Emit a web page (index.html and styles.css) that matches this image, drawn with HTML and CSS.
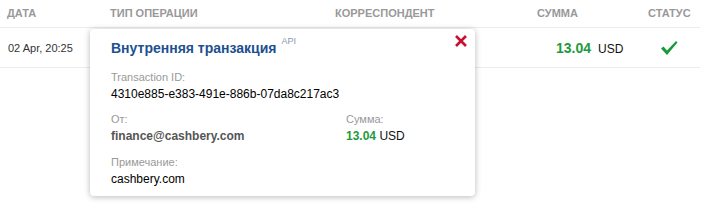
FILE: index.html
```html
<!DOCTYPE html>
<html>
<head>
<meta charset="utf-8">
<link rel="stylesheet" href="styles.css">
</head>
<body>
<div class="page">
  <div class="table">
    <div class="row head">
      <div class="c-date">Дата</div>
      <div class="c-type">Тип операции</div>
      <div class="c-corr">Корреспондент</div>
      <div class="c-sum">Сумма</div>
      <div class="c-status">Статус</div>
    </div>
    <div class="row body">
      <div class="c-date">02 Apr, 20:25</div>
      <div class="c-type"></div>
      <div class="c-corr"></div>
      <div class="c-sum"><span class="amount">13.04</span><span class="cur">USD</span></div>
      <div class="c-status">
        <svg class="check" width="18" height="16" viewBox="0 0 18 16"><path d="M1 8.5 L3.5 6.5 L7 10.5 L16 1 L17.5 2.5 L7 15 Z" fill="#1a9a3a"/></svg>
      </div>
    </div>
  </div>

  <div class="popup">
    <div class="popup-head">
      <h2 class="title">Внутренняя транзакция</h2><sup class="api">API</sup>
      <svg class="close" width="12" height="12" viewBox="0 0 12 12"><path d="M1 1 L11 11 M11 1 L1 11" stroke="#c8102e" stroke-width="2.6" stroke-linecap="butt"/></svg>
    </div>
    <div class="field">
      <div class="label">Transaction ID:</div>
      <div class="value">4310e885-e383-491e-886b-07da8c217ac3</div>
    </div>
    <div class="field two">
      <div class="col">
        <div class="label">От:</div>
        <div class="value from">finance@cashbery.com</div>
      </div>
      <div class="col">
        <div class="label">Сумма:</div>
        <div class="value"><span class="amount">13.04</span> <span class="cur2">USD</span></div>
      </div>
    </div>
    <div class="field">
      <div class="label">Примечание:</div>
      <div class="value">cashbery.com</div>
    </div>
  </div>
</div>
</body>
</html>
```

FILE: styles.css
```css
* { box-sizing: border-box; }
html, body { margin: 0; padding: 0; background: #fff; }
body { font-family: "Liberation Sans", Arial, sans-serif; color: #222; }
.page { position: relative; width: 711px; height: 219px; }
.table { width: 700px; }
.row { display: flex; align-items: center; border-bottom: 1px solid #ececec; }
.row.head { height: 28px; font-size: 11px; font-weight: bold; text-transform: uppercase; color: #999; padding-bottom: 2px; }
.row.body { height: 40px; font-size: 11px; color: #333; padding-top: 1px; }
.c-date { width: 110px; padding-left: 7px; }
.row.body .c-date { padding-left: 8px; }
.c-type { width: 225px; }
.c-corr { width: 202px; }
.c-sum { width: 111px; }
.row.body .c-sum { padding-left: 19px; }
.c-status { flex: 1; }
.row.body .c-status { padding-left: 12px; display: flex; }
.amount { color: #1c9b3c; font-weight: bold; font-size: 14px; }
.cur { margin-left: 7px; color: #111; font-size: 12px; }
.cur2 { color: #111; font-size: 12px; }
.check { display: block; }

.popup {
  position: absolute; left: 90px; top: 29px; width: 385px; height: 167px;
  background: #fff; border-radius: 4px;
  box-shadow: 0 1px 6px rgba(0,0,0,0.28);
  padding: 8px 21px 0 21px;
}
.popup-head { display: flex; align-items: flex-start; height: 30px; position: relative; }
.title { margin: 3px 0 0 0; font-size: 14px; font-weight: bold; color: #1d4f91; }
.api { font-size: 9px; color: #8a98b2; margin-left: 5px; margin-top: -1px; font-weight: normal; }
.close { position: absolute; right: -13px; top: -2px; }
.label { font-size: 11px; color: #999; height: 13px; line-height: 13px; }
.value { font-size: 12px; color: #000; margin-top: 2px; height: 17px; line-height: 17px; }
.field { height: 42px; }
.two { height: 43px; }
.popup-head + .field { margin-top: 4px; }
.two { display: flex; }
.two .col:first-child { width: 235px; }
.from { font-size: 12px; font-weight: bold; color: #555; }
.two .amount { font-size: 12px; }
```
